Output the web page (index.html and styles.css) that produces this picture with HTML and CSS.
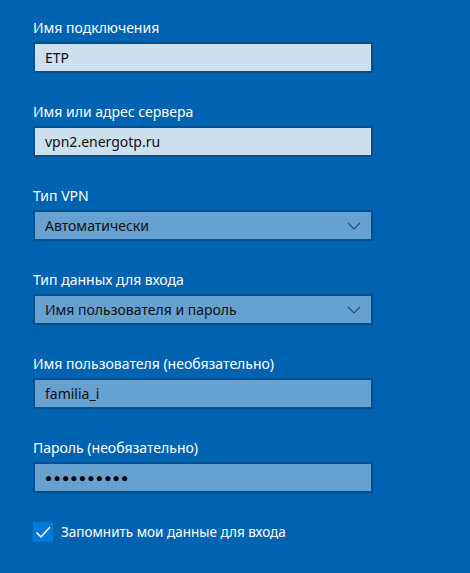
FILE: index.html
```html
<!DOCTYPE html>
<html lang="ru">
<head>
  <meta charset="UTF-8" />
  <title>VPN</title>
  <link rel="stylesheet" href="styles.css">
</head>
<body>
  <div class="vpn-form">
    <div class="field">
      <label class="field-label">Имя подключения</label>
      <div class="box light">ETP</div>
    </div>
    <div class="field">
      <label class="field-label">Имя или адрес сервера</label>
      <div class="box light">vpn2.energotp.ru</div>
    </div>
    <div class="field">
      <label class="field-label">Тип VPN</label>
      <div class="box select">
        <span>Автоматически</span>
        <svg class="chevron" width="14" height="8" viewBox="0 0 14 8"><path d="M1 1 L7 7 L13 1" fill="none" stroke="#2c4f70" stroke-width="1.2"/></svg>
      </div>
    </div>
    <div class="field">
      <label class="field-label">Тип данных для входа</label>
      <div class="box select">
        <span>Имя пользователя и пароль</span>
        <svg class="chevron" width="14" height="8" viewBox="0 0 14 8"><path d="M1 1 L7 7 L13 1" fill="none" stroke="#2c4f70" stroke-width="1.2"/></svg>
      </div>
    </div>
    <div class="field">
      <label class="field-label">Имя пользователя (необязательно)</label>
      <div class="box">familia_i</div>
    </div>
    <div class="field">
      <label class="field-label">Пароль (необязательно)</label>
      <div class="box"><span class="dots">●●●●●●●●●●</span></div>
    </div>
    <div class="remember">
      <span class="check">
        <svg width="20" height="20" viewBox="0 0 20 20"><path d="M3.5 10.5 L8 15 L17 5" fill="none" stroke="#fff" stroke-width="1.5"/></svg>
      </span>
      <span>Запомнить мои данные для входа</span>
    </div>
  </div>
</body>
</html>
```

FILE: styles.css
```css
/* Основа */
body {
  margin: 0;
  background: #0063b1;
  font-family: "Noto Sans", "Open Sans", sans-serif;
  font-size: 14px;
  color: #fff;
}

.vpn-form {
  width: 340px;
  padding: 18px 0 0 33px;
}

/* Поля */
.field {
  margin-bottom: 29px;
}

.field-label {
  display: block;
  line-height: 20px;
  margin-bottom: 4px;
}

.box {
  display: flex;
  align-items: center;
  height: 31px;
  box-sizing: border-box;
  border: 2px solid #004f8e;
  background: #66a1d0;
  color: #111;
  padding: 0 10px;
}

.box.light {
  background: #cce0ef;
}

.select {
  justify-content: space-between;
}

.dots {
  font-size: 12px;
  letter-spacing: 1.2px;
  color: #000;
}

/* Чекбокс */
.remember {
  display: flex;
  align-items: center;
  gap: 8px;
  margin-top: 11px;
  font-size: 13.5px;
}

.check {
  display: flex;
  width: 20px;
  height: 20px;
  background: #0078d7;
}
```
